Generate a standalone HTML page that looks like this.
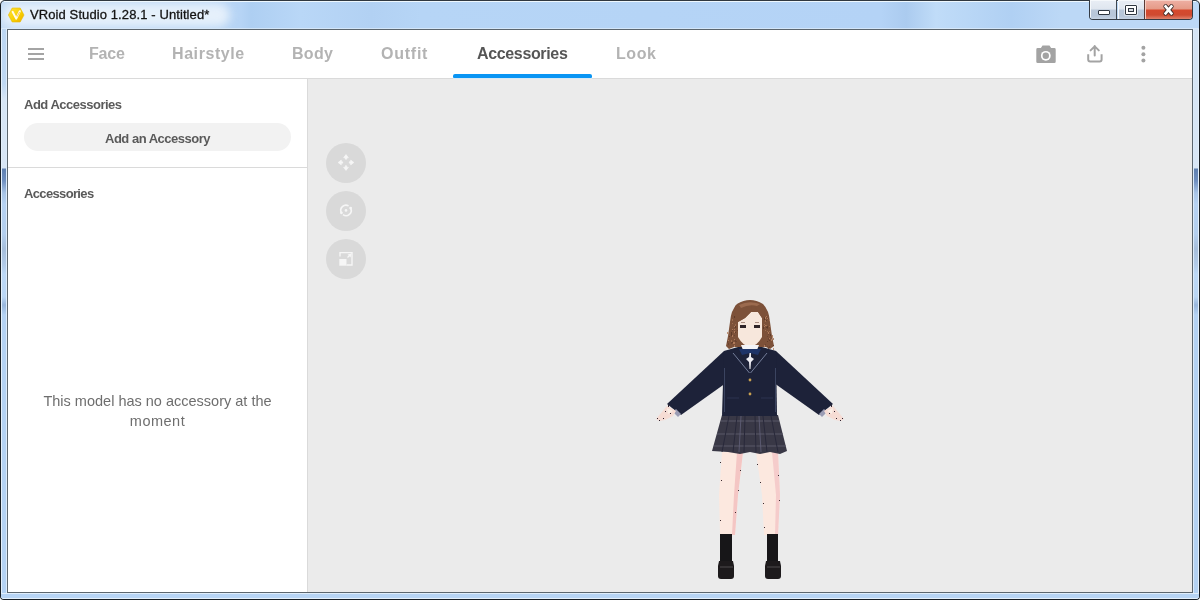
<!DOCTYPE html>
<html><head><meta charset="utf-8">
<style>
*{margin:0;padding:0;box-sizing:border-box}
html,body{width:1200px;height:600px;overflow:hidden;background:#fff;font-family:"Liberation Sans",sans-serif;position:relative}
.a{will-change:transform}
.a{position:absolute}
#frame{left:0;top:0;width:1200px;height:600px;border:1px solid #181e24;border-top-color:#303840;border-radius:5px 5px 4px 4px;background:linear-gradient(90deg,#c3dbf5 0px,#b6d4f5 240px,#aecff2 250px,#b9d7f7 300px,#b2d1f3 370px,#b6d5f6 420px,#b4d3f6 880px,#abcbef 905px,#c0dcf8 935px,#b0d0f3 1010px,#bcd8f6 1060px)}
#lframe{left:1px;top:29px;width:6px;height:564px;background:linear-gradient(180deg,#bcd6f2 0,#bfd8f3 55px,#d6e5f5 70px,#d8e6f5 139px,#5f80b0 140px,#7090c0 152px,#a8c4e6 164px,#b6d2f2 175px,#b4cfee 205px,#a6bedb 220px,#b2cbe8 236px,#bcd8f6 245px,#bad6f4 268px,#98b6dc 276px,#b4d2f3 286px,#b4d2f3 564px);border-left:1px solid #e4f0fb;border-right:1px solid #dcebfa}
#rframe{left:1193px;top:29px;width:6px;height:564px;background:linear-gradient(180deg,#d4e4f5 0,#d8e6f5 139px,#5f80b0 140px,#7090c0 152px,#a8c4e6 164px,#b6d2f2 175px,#b4cfee 205px,#a6bedb 220px,#b2cbe8 236px,#bcd8f6 245px,#bad6f4 268px,#98b6dc 276px,#b4d2f3 286px,#b4d2f3 564px);border-left:1px solid #dcebfa;border-right:1px solid #e4f0fb}
#bframe{left:1px;top:593px;width:1198px;border-radius:0 0 3px 3px;height:6px;background:#b7d4f4;border-top:1px solid #e0eefb;border-bottom:1px solid #e4f0fb}
#ttop{left:4px;top:1px;width:1192px;height:1px;background:#eef8fe}
#tbglow{left:1px;top:1px;width:228px;height:24px;border-radius:12px;background:rgba(236,244,252,.88);filter:blur(5px)}
#client{left:7px;top:29px;width:1186px;height:564px;border:1px solid #5c666e;background:#fff}
#title{left:30px;top:7px;font-size:13px;letter-spacing:0.1px;color:#141414;white-space:nowrap;-webkit-text-stroke:0.3px #141414}
.tab{top:44px;font-size:16px;font-weight:bold;color:#b3b3b3;white-space:nowrap;letter-spacing:-0.45px;line-height:20px}
#viewport{left:308px;top:79px;width:884px;height:513px;background:#ebebeb}
#hdrline{left:8px;top:78px;width:1184px;height:1px;background:#dadada}
#sideline{left:307px;top:79px;width:1px;height:513px;background:#dadada}
#sep{left:8px;top:167px;width:299px;height:1px;background:#dadada}
.lbl{font-size:13px;font-weight:bold;color:#5a5a5a;white-space:nowrap;line-height:16px;letter-spacing:-0.5px}
#btn{left:24px;top:123px;width:267px;height:28px;border-radius:14px;background:#f2f2f2}
#empty{left:8px;top:391px;width:299px;text-align:center;font-size:14.5px;color:#6e6e6e;line-height:20px}
.vb{width:40px;height:40px;border-radius:50%;background:#d9d9d9;left:326px}
#wbtns{left:1089px;top:0;width:104px;height:20px;border:1px solid #343b44;border-top:none;border-radius:0 0 4px 4px;overflow:hidden}
.wb{top:0;height:19px}
</style></head><body>
<div id="frame" class="a"></div>
<div id="ttop" class="a"></div>
<div class="a" style="left:1px;top:28px;width:1198px;height:1px;background:rgba(235,244,252,.55)"></div>
<div class="a" style="left:1px;top:2px;width:300px;height:26px;overflow:hidden;border-top-left-radius:3px"><div id="tbglow" class="a"></div></div>
<div id="lframe" class="a"></div>
<div id="rframe" class="a"></div>
<div id="bframe" class="a"></div>
<div id="title" class="a">VRoid Studio 1.28.1 - Untitled*</div>
<svg class="a" style="left:0;top:0" width="30" height="29" viewBox="0 0 30 29">
 <defs><linearGradient id="lg" x1="0" y1="0" x2="1" y2="1"><stop offset="0" stop-color="#ffe03a"/><stop offset="0.6" stop-color="#f7cf00"/><stop offset="1" stop-color="#f0a800"/></linearGradient></defs>
 <polygon points="12.2,8 20.2,8 24,15 20.2,22 12.2,22 8.4,15" fill="url(#lg)" stroke="#e6b800" stroke-width="0.6"/>
 <polyline points="12.6,11.8 16.2,18.6 19.8,11.2" fill="none" stroke="#fffbe8" stroke-width="2" stroke-linejoin="round" stroke-linecap="round"/>
 <line x1="17.2" y1="16.6" x2="19.6" y2="12" stroke="#f09a20" stroke-width="1" opacity=".6"/>
</svg>
<div id="wbtns" class="a">
 <div class="a wb" style="left:0;width:27px;background:linear-gradient(180deg,#e9eef5 0,#dfe6ef 9px,#bac8da 10px,#b7c6d9 16px,#c6d3e3 19px);border-right:1px solid #3d454e;box-shadow:inset 1px 1px 0 #f5f8fb"></div>
 <div class="a wb" style="left:28px;width:26px;background:linear-gradient(180deg,#e9eef5 0,#dfe6ef 9px,#bac8da 10px,#b7c6d9 16px,#c6d3e3 19px);box-shadow:inset 1px 1px 0 #f5f8fb"></div>
 <div class="a wb" style="left:54px;width:49px;background:linear-gradient(180deg,#eeb0a4 0,#e59a87 9px,#d5492d 10px,#cf4a30 15px,#e0826c 19px);border-left:1px solid #5a3a36;box-shadow:inset 1px 1px 0 #f6d0c6"></div>
 <div class="a" style="left:8px;top:10px;width:12px;height:5px;border:1px solid #2e3640;background:#fff;border-radius:1px"></div>
 <div class="a" style="left:35px;top:5px;width:12px;height:10px;border:1px solid #2e3640;background:#fff;border-radius:1px;box-shadow:0 0 0 1px rgba(255,255,255,.5)"></div>
 <div class="a" style="left:38px;top:8px;width:6px;height:4px;border:1px solid #2e3640;background:#d8dce2"></div>
 <svg class="a" style="left:54px;top:0" width="49" height="19" viewBox="0 0 49 19">
  <path d="M21.6 6.4 L27.4 13.4 M27.4 6.4 L21.6 13.4" transform="translate(0,0)" stroke="#3b2a28" stroke-width="4.6" fill="none" stroke-linecap="round"/>
  <path d="M21.6 6.4 L27.4 13.4 M27.4 6.4 L21.6 13.4" stroke="#fff" stroke-width="2.6" fill="none" stroke-linecap="square"/>
 </svg>
</div>
<div id="client" class="a"></div>
<div id="hdrline" class="a"></div>
<div id="viewport" class="a"></div>
<div id="sideline" class="a"></div>
<div id="sep" class="a"></div>

<!-- hamburger -->
<div class="a" style="left:28px;top:48px;width:16px;height:2px;background:#a4a4a4"></div>
<div class="a" style="left:28px;top:53px;width:16px;height:2px;background:#a4a4a4"></div>
<div class="a" style="left:28px;top:58px;width:16px;height:2px;background:#a4a4a4"></div>

<!-- tabs -->
<div class="a tab" style="left:89px;letter-spacing:-0.22px">Face</div>
<div class="a tab" style="left:172px;letter-spacing:0.58px">Hairstyle</div>
<div class="a tab" style="left:292px;letter-spacing:0.28px">Body</div>
<div class="a tab" style="left:381px;letter-spacing:0.75px">Outfit</div>
<div class="a tab" style="left:477px;color:#565656;letter-spacing:-0.35px">Accessories</div>
<div class="a tab" style="left:616px;letter-spacing:0.55px">Look</div>
<div class="a" style="left:453px;top:74px;width:139px;height:4px;background:#0995f4;border-radius:2px 2px 1px 1px"></div>
<div class="a" style="left:453px;top:78px;width:139px;height:1px;background:#d6e9f6"></div>

<!-- header icons -->
<svg class="a" style="left:1030px;top:40px" width="130" height="30" viewBox="1030 40 130 30">
 <path d="M1042.5 45.5 h7 l1.6 2.6 h3.2 a1.4 1.4 0 0 1 1.4 1.4 v12.2 a1.4 1.4 0 0 1 -1.4 1.4 h-16.6 a1.4 1.4 0 0 1 -1.4 -1.4 v-12.2 a1.4 1.4 0 0 1 1.4 -1.4 h3.2 z" fill="#a3a3a3"/>
 <circle cx="1045.8" cy="55.8" r="4.9" fill="#fff"/>
 <circle cx="1045.8" cy="55.8" r="3.2" fill="#a3a3a3"/>
 <path d="M1088.2 54.2 v5.2 a2 2 0 0 0 2 2 h9.4 a2 2 0 0 0 2 -2 v-5.2" fill="none" stroke="#a3a3a3" stroke-width="2"/>
 <path d="M1094.7 55.6 v-9.6 M1090.6 50.4 l4.1 -4.1 l4.1 4.1" fill="none" stroke="#a3a3a3" stroke-width="2" stroke-linecap="round"/>
 <circle cx="1143.4" cy="47.8" r="2" fill="#a3a3a3"/>
 <circle cx="1143.4" cy="54.2" r="2" fill="#a3a3a3"/>
 <circle cx="1143.4" cy="60.6" r="2" fill="#a3a3a3"/>
</svg>

<!-- sidebar -->
<div class="a lbl" style="left:24px;top:97px">Add Accessories</div>
<div id="btn" class="a"></div>
<div class="a lbl" style="left:24px;top:131px;width:267px;text-align:center">Add an Accessory</div>
<div class="a lbl" style="left:24px;top:186px;letter-spacing:-0.65px">Accessories</div>
<div id="empty" class="a">This model has no accessory at the<br><span style="letter-spacing:0.5px">moment</span></div>

<!-- viewport buttons -->
<div class="a vb" style="top:143px"></div>
<div class="a vb" style="top:191px"></div>
<div class="a vb" style="top:239px"></div>
<svg class="a" style="left:326px;top:143px" width="40" height="136" viewBox="326 143 40 136">
 <g fill="#f6f6f6" stroke="#f6f6f6" stroke-width="0.6" stroke-linejoin="round">
  <polygon points="346,154.6 343.6,157.8 348.4,157.8"/><rect x="345.3" y="157.6" width="1.4" height="1.6"/>
  <polygon points="346,170.4 343.6,167.2 348.4,167.2"/><rect x="345.3" y="165.8" width="1.4" height="1.6"/>
  <polygon points="338.1,162.5 341.3,160.1 341.3,164.9"/><rect x="341.1" y="161.8" width="1.6" height="1.4"/>
  <polygon points="353.9,162.5 350.7,160.1 350.7,164.9"/><rect x="349.3" y="161.8" width="1.6" height="1.4"/>
 </g>
 <path d="M341.41 212.84 A5.2 5.2 0 0 1 348.60 205.90 M350.63 208.04 A5.2 5.2 0 0 1 343.02 214.66" fill="none" stroke="#f6f6f6" stroke-width="1.6"/>
 <circle cx="341.41" cy="212.84" r="1.4" fill="#f6f6f6"/>
 <circle cx="350.63" cy="208.04" r="1.4" fill="#f6f6f6"/>
 <circle cx="346" cy="210.4" r="1.3" fill="#f6f6f6"/>
 <path d="M340 256.5 V252.6 H352 V265 H346.5" fill="none" stroke="#f6f6f6" stroke-width="1.4"/>
 <rect x="339.3" y="259" width="7.2" height="6.7" fill="#f6f6f6"/>
 <path d="M347.5 257.5 L351 254" fill="none" stroke="#f6f6f6" stroke-width="1.3"/>
 <polygon points="351.3,253.7 347.6,254.4 350.6,257.4" fill="#f6f6f6"/>
</svg>

<!-- CHARACTER -->
<svg class="a" style="left:640px;top:290px" width="220" height="300" viewBox="640 290 220 300">
 <!-- arms -->
 <polygon points="724,351 740,350 733,378 681,415 667,404" fill="#1d2239"/>
 <polygon points="776,351 760,350 767,378 819,415 833,404" fill="#1d2239"/>
 <!-- cuffs -->
 <polygon points="676,409 681,414 678,417 673,412" fill="#9a9cb4"/>
 <polygon points="824,409 819,414 822,417 827,412" fill="#9a9cb4"/>
 <!-- hands -->
 <path d="M667,406 L676,411 L673,416 L665,420 L659,421 L656,419 L661,413 Z" fill="#f6dcd4"/>
 <path d="M833,406 L824,411 L827,416 L835,420 L841,421 L844,419 L839,413 Z" fill="#f6dcd4"/>
 <path d="M667,408 L673,411 L668,414 Z" fill="#faeee6"/>
 <path d="M833,408 L827,411 L832,414 Z" fill="#faeee6"/>
 <g fill="#2e2430">
  <rect x="657" y="418" width="1" height="1"/><rect x="659" y="420" width="1" height="1"/><rect x="663" y="418" width="1" height="1"/><rect x="665" y="411" width="1" height="1"/><rect x="670" y="413" width="1" height="1"/><rect x="668" y="405" width="1" height="2"/>
  <rect x="842" y="418" width="1" height="1"/><rect x="840" y="420" width="1" height="1"/><rect x="836" y="418" width="1" height="1"/><rect x="834" y="411" width="1" height="1"/><rect x="829" y="413" width="1" height="1"/><rect x="831" y="405" width="1" height="2"/>
 </g>
 <!-- legs -->
 <path d="M722,452 L743,452 L738,495 L735,535 L720,535 L719,495 Z" fill="#fce8df"/>
 <path d="M756,452 L778,452 L780,495 L778,535 L764,535 L762,495 Z" fill="#fce8df"/>
 <path d="M737,452 L743,452 L738,495 L735,535 L732,535 L734,495 Z" fill="#f4c6c4"/>
 <path d="M772,452 L778,452 L780,495 L778,535 L775,535 L776,495 Z" fill="#f5cccb"/>
 <g fill="#3a2a30">
  <rect x="720" y="462" width="1" height="1"/><rect x="721" y="480" width="1" height="1"/><rect x="740" y="470" width="1" height="1"/><rect x="738" y="490" width="1" height="1"/><rect x="735" y="512" width="1" height="1"/><rect x="720" y="520" width="1" height="1"/>
  <rect x="757" y="464" width="1" height="1"/><rect x="760" y="482" width="1" height="1"/><rect x="763" y="503" width="1" height="1"/><rect x="778" y="475" width="1" height="1"/><rect x="779" y="500" width="1" height="1"/><rect x="764" y="527" width="1" height="1"/>
 </g>
 <!-- socks -->
 <rect x="720" y="534" width="12" height="29" fill="#171618"/>
 <rect x="767" y="534" width="11" height="29" fill="#171618"/>
 <!-- shoes -->
 <path d="M719,561 h14 l1,5 v10 q0,3 -3,3 h-10 q-3,0 -3,-3 v-10 z" fill="#1d1a1c"/>
 <path d="M766,561 h14 l1,5 v10 q0,3 -3,3 h-10 q-3,0 -3,-3 v-10 z" fill="#1d1a1c"/>
 <rect x="720" y="566" width="13" height="2" fill="#353234"/>
 <rect x="767" y="566" width="13" height="2" fill="#353234"/>
 <!-- skirt -->
 <polygon points="722,415 778,415 787,451 780,454 770,452 760,454 750,452 740,454 728,452 712,451" fill="#393846"/>
 <g stroke="#5a5968" stroke-width="1">
  <line x1="721" y1="421" x2="779" y2="421"/>
  <line x1="717" y1="434" x2="783" y2="434"/>
  <line x1="714" y1="446" x2="786" y2="446"/>
 </g>
 <g stroke="#28283a" stroke-width="1">
  <line x1="729" y1="416" x2="722" y2="452"/>
  <line x1="737" y1="416" x2="733" y2="452"/>
  <line x1="745" y1="416" x2="744" y2="452"/>
  <line x1="755" y1="416" x2="756" y2="452"/>
  <line x1="763" y1="416" x2="767" y2="452"/>
  <line x1="771" y1="416" x2="778" y2="452"/>
 </g>
 <g stroke="#62617a" stroke-width="1" opacity=".8">
  <line x1="741" y1="416" x2="739" y2="452"/>
  <line x1="759" y1="416" x2="761" y2="452"/>
 </g>
 <!-- hair back -->
 <path d="M737,304 Q750,296 763,304 Q769,310 770,322 L772,336 L774,346 L770,349 L766,347 L734,347 L729,349 L726,346 L728,336 L730,322 Q731,310 737,304 Z" fill="#7d5139"/>
 <g opacity=".85"><rect x="773" y="338" width="1" height="2" fill="#a67454"/><rect x="732" y="319" width="1" height="2" fill="#a67454"/><rect x="769" y="331" width="1" height="1" fill="#a67454"/><rect x="734" y="329" width="1" height="1" fill="#b88262"/><rect x="769" y="326" width="1" height="1" fill="#a67454"/><rect x="764" y="324" width="1" height="1" fill="#a67454"/><rect x="732" y="329" width="1" height="2" fill="#6a4230"/><rect x="767" y="328" width="1" height="1" fill="#6a4230"/><rect x="731" y="340" width="1" height="2" fill="#a67454"/><rect x="764" y="326" width="1" height="1" fill="#b88262"/><rect x="772" y="335" width="1" height="2" fill="#a67454"/><rect x="732" y="335" width="1" height="2" fill="#b88262"/><rect x="766" y="327" width="1" height="1" fill="#5c3826"/><rect x="727" y="332" width="1" height="2" fill="#b88262"/><rect x="732" y="342" width="1" height="1" fill="#5c3826"/><rect x="768" y="318" width="1" height="1" fill="#6a4230"/><rect x="734" y="331" width="1" height="2" fill="#b88262"/><rect x="764" y="345" width="1" height="2" fill="#b88262"/><rect x="728" y="343" width="1" height="2" fill="#6a4230"/><rect x="765" y="325" width="1" height="1" fill="#b88262"/><rect x="767" y="336" width="1" height="1" fill="#6a4230"/><rect x="734" y="335" width="1" height="1" fill="#6a4230"/><rect x="727" y="341" width="1" height="2" fill="#6a4230"/><rect x="773" y="345" width="1" height="1" fill="#5c3826"/><rect x="737" y="318" width="1" height="2" fill="#5c3826"/><rect x="736" y="324" width="1" height="2" fill="#6a4230"/><rect x="734" y="326" width="1" height="1" fill="#b88262"/><rect x="731" y="342" width="1" height="2" fill="#6a4230"/><rect x="734" y="345" width="1" height="2" fill="#b88262"/><rect x="770" y="334" width="1" height="1" fill="#5c3826"/><rect x="735" y="340" width="1" height="2" fill="#6a4230"/><rect x="763" y="327" width="1" height="2" fill="#5c3826"/><rect x="769" y="320" width="1" height="1" fill="#b88262"/><rect x="771" y="339" width="1" height="2" fill="#b88262"/><rect x="768" y="334" width="1" height="1" fill="#6a4230"/><rect x="768" y="332" width="1" height="2" fill="#b88262"/><rect x="773" y="348" width="1" height="2" fill="#b88262"/><rect x="769" y="338" width="1" height="1" fill="#b88262"/><rect x="768" y="339" width="1" height="1" fill="#6a4230"/><rect x="734" y="339" width="1" height="1" fill="#b88262"/><rect x="767" y="326" width="1" height="2" fill="#5c3826"/><rect x="764" y="317" width="1" height="2" fill="#6a4230"/><rect x="737" y="330" width="1" height="1" fill="#6a4230"/><rect x="765" y="330" width="1" height="1" fill="#a67454"/><rect x="729" y="336" width="1" height="1" fill="#5c3826"/><rect x="734" y="342" width="1" height="2" fill="#b88262"/><rect x="732" y="329" width="1" height="1" fill="#b88262"/><rect x="767" y="341" width="1" height="1" fill="#5c3826"/><rect x="767" y="318" width="1" height="1" fill="#b88262"/><rect x="768" y="348" width="1" height="2" fill="#b88262"/><rect x="733" y="342" width="1" height="2" fill="#b88262"/><rect x="735" y="326" width="1" height="2" fill="#5c3826"/><rect x="735" y="324" width="1" height="2" fill="#a67454"/><rect x="728" y="340" width="1" height="1" fill="#b88262"/><rect x="769" y="340" width="1" height="1" fill="#5c3826"/><rect x="770" y="334" width="1" height="2" fill="#5c3826"/><rect x="731" y="332" width="1" height="2" fill="#5c3826"/><rect x="765" y="317" width="1" height="2" fill="#b88262"/><rect x="766" y="325" width="1" height="1" fill="#a67454"/><rect x="767" y="331" width="1" height="1" fill="#a67454"/><rect x="766" y="316" width="1" height="1" fill="#b88262"/><rect x="764" y="318" width="1" height="2" fill="#5c3826"/><rect x="731" y="334" width="1" height="2" fill="#5c3826"/><rect x="737" y="317" width="1" height="2" fill="#6a4230"/><rect x="772" y="337" width="1" height="1" fill="#b88262"/><rect x="768" y="338" width="1" height="1" fill="#6a4230"/><rect x="735" y="332" width="1" height="1" fill="#5c3826"/><rect x="734" y="316" width="1" height="2" fill="#5c3826"/><rect x="769" y="346" width="1" height="2" fill="#6a4230"/><rect x="765" y="320" width="1" height="2" fill="#a67454"/><rect x="767" y="346" width="1" height="1" fill="#6a4230"/><rect x="768" y="347" width="1" height="2" fill="#6a4230"/><rect x="736" y="320" width="1" height="2" fill="#6a4230"/><rect x="736" y="320" width="1" height="2" fill="#a67454"/><rect x="766" y="320" width="1" height="1" fill="#5c3826"/><rect x="732" y="323" width="1" height="1" fill="#a67454"/><rect x="765" y="344" width="1" height="1" fill="#6a4230"/><rect x="763" y="326" width="1" height="1" fill="#6a4230"/><rect x="728" y="340" width="1" height="1" fill="#b88262"/><rect x="736" y="341" width="1" height="1" fill="#6a4230"/></g>
 <!-- torso -->
 <path d="M738,347 L762,347 L776,351 L777,416 L722,416 L724,351 Z" fill="#1d2239"/>
 <line x1="724.5" y1="368" x2="724.5" y2="412" stroke="#3b4460" stroke-width="1"/>
 <line x1="775.5" y1="368" x2="775.5" y2="412" stroke="#3b4460" stroke-width="1"/>
 <!-- face -->
 <path d="M738,322 L745,318 L751,312 L758,312 L762,318 L762,337 Q757,346 750,347 Q743,346 738,337 Z" fill="#f7e7dc"/>
 <!-- hair shade on forehead -->
 <path d="M735,306 Q742,300 752,302 L751,312 L745,318 L738,322 L736,328 Z" fill="#7d5139"/>
 <path d="M752,302 Q760,302 765,308 L763,322 L762,318 L758,312 Z" fill="#7d5139"/>
 <path d="M739,305 Q749,300 760,304 L757,306 Q749,304 741,308 Z" fill="#a27154" opacity=".8"/>
 <!-- eyes -->
 <rect x="740" y="325" width="6" height="3" fill="#2f2428"/>
 <rect x="754" y="325" width="6" height="3" fill="#2f2428"/>
 <rect x="741" y="322" width="4" height="1" fill="#8a6a5c" opacity=".7"/>
 <rect x="755" y="322" width="4" height="1" fill="#8a6a5c" opacity=".7"/>
 <!-- collar & tie -->
 <polygon points="741,345 759,345 757,350 750,351 743,350" fill="#f3f3f7"/>
 <polygon points="739,349 761,349 758,355 750,353 742,355" fill="#1e3468"/>
 <path d="M749.5,353 L751,353 L751,357 L754,359 L751,362 L750.5,369 L749.5,369 L749,362 L746,359 L749,357 Z" fill="#eeeef4"/>
 <!-- lapels -->
 <path d="M733,353 L749.5,373 M767,353 L750.5,373" fill="none" stroke="#747e9a" stroke-width="1"/>
 <!-- pockets -->
 <path d="M727,398 h12 M761,398 h12" stroke="#2c3350" stroke-width="1"/>
 <!-- buttons -->
 <circle cx="750" cy="380" r="1.4" fill="#c8a050"/>
 <circle cx="750" cy="394" r="1.4" fill="#c8a050"/>
</svg>

</body></html>
